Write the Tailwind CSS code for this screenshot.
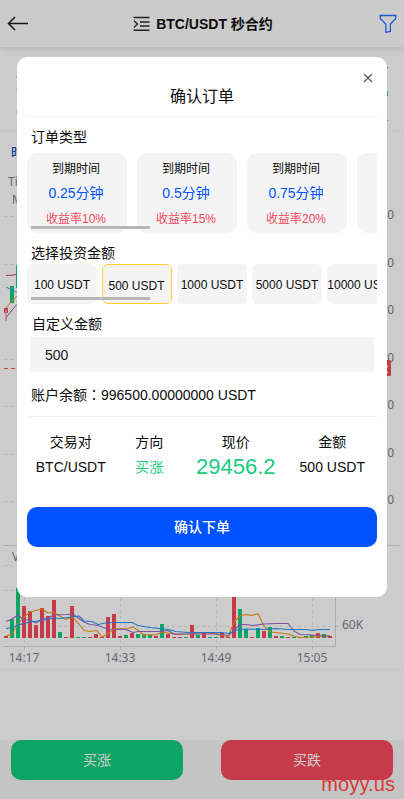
<!DOCTYPE html>
<html lang="zh-CN">
<head>
<meta charset="utf-8">
<meta name="viewport" content="width=device-width, initial-scale=1">
<title>BTC/USDT 秒合约</title>
<script src="https://cdn.jsdelivr.net/npm/@tailwindcss/browser@4"></script>
</head>
<body class="relative h-[799px] w-[404px] overflow-hidden bg-[#cccccc] font-['Liberation_Sans','Noto_Sans_CJK_SC',sans-serif] text-sm text-[#0c0c0c]">

<div class="flex h-full flex-col">
  <header class="flex h-[47px] shrink-0 items-center justify-between bg-[#cbcbcb] pr-[7px] pl-[7px] shadow-[0_3px_4px_rgba(0,0,0,0.09)]">
    <svg class="h-5 w-[22px]" viewBox="0 0 22 20" fill="none" stroke="#151515" stroke-width="1.5"><path d="M21 9.5H1.5M8 3L1.5 9.5L8 16"/></svg>
    <div class="flex items-center gap-[6px] pr-[2px]">
      <svg class="h-4 w-[17px]" viewBox="0 0 17 16" fill="none" stroke="#222" stroke-width="1.4"><path d="M0.5 1.5H16.5M7 6H16.5M7 10H16.5M0.5 14.3H16.5M1 4.7L4.5 8L1 11.3"/></svg>
      <h1 class="text-sm leading-5 font-bold whitespace-nowrap">BTC/USDT 秒合约</h1>
    </div>
    <svg class="h-5 w-[18px]" viewBox="0 0 18 20" fill="none" stroke="#1d55dc" stroke-width="1.3" stroke-linejoin="round"><path d="M1.2 1.5H16.8V4.5L11.4 10V17.3L6.8 18.4V10L1.2 4.5Z"/></svg>
  </header>

  <section class="flex h-[85px] shrink-0 justify-between px-4 pt-5">
    <div class="flex flex-col"><i class="mt-[9px] h-[2px] w-[2px] bg-[#cfa25f]"></i><i class="mt-[11px] h-[2px] w-[2px] bg-[#cfa25f]"></i><i class="mt-[20px] h-[2px] w-[2px] bg-[#cfa25f]"></i></div>
    <div class="flex flex-col"><i class="h-px w-[2px] bg-[#3b86b8]"></i><i class="mt-[23px] h-[5px] w-[2px] bg-[#3b86b8]"></i><i class="mt-[24px] h-px w-[2px] bg-[#3b86b8]"></i></div>
  </section>

  <section class="h-[538px] shrink-0 border-b border-[#c7c7c7] bg-[#cccccc] shadow-[0_-1px_3px_rgba(0,0,0,0.04)]">
    <svg class="block h-[537px] w-[404px]" viewBox="0 132 404 537" font-family="'Noto Sans','Noto Sans CJK SC',sans-serif" font-size="12" fill="#626873">
      <text x="11" y="157" fill="#063c9c" font-weight="500">时间</text>
      <text x="8" y="186">Time</text>
      <text x="12" y="204">MA</text>
      <g stroke="#b9b9b9" stroke-dasharray="3 3" fill="none">
        <path d="M4 216.5H335M4 264.5H335M4 311.5H335M4 359.5H335M4 406.5H335M4 454.5H335M4 501.5H335M4 565.5H335M4 590.5H335M4 626.5H335"/>
        <path d="M24.5 160V646M120.5 160V646M216.5 160V646M312.5 160V646"/>
      </g>
      <g stroke="#acacac" fill="none"><path d="M4 545.5H400M4 646.5H335.5V160M335.5 626.5H339M24.5 646V649.5M120.5 646V649.5M216.5 646V649.5M312.5 646V649.5"/></g>
      <path d="M4 368.5H335" stroke="#c93c4c" stroke-dasharray="4 3"/>
      <path d="M16 265h3v23h-3zM10 286h4v17h-4z" fill="#0da466"/>
      <path d="M4 308h4v5h-4z" fill="#c93947"/><path d="M6 310V321" stroke="#c77880" stroke-width="1.5"/>
      <g fill="none"><path d="M6 275.5L14 275L20 273" stroke="#9b3764"/><path d="M6 287L20 294" stroke="#3776ba"/><path d="M6 308L12 301L20 293" stroke="#c87915"/><path d="M6 318L12 310L20 301" stroke="#7e53a0"/></g>
      <g text-anchor="end">
        <text x="394" y="219">29520.0</text><text x="394" y="267">29500.0</text><text x="394" y="314">29480.0</text><text x="394" y="362">29460.0</text><text x="394" y="409">29440.0</text><text x="394" y="457">29420.0</text><text x="394" y="504">29400.0</text>
      </g>
      <rect x="336" y="360" width="55" height="16" rx="1.500" fill="#cb384a"/><text x="388.500" y="373" text-anchor="end" fill="#d8d0d0">29456.2</text>
      <text x="12" y="561">VOL</text>
      <path fill="#c83a47" d="M4 636h4v2h-4zM22 606h4v32h-4zM28 611h4v27h-4zM34 625h4v13h-4zM40 608h4v30h-4zM46 616h4v22h-4zM52 600h4v38h-4zM64 637h4v1h-4zM70 606h4v32h-4zM94 634h4v4h-4zM88 637h4v1h-4zM100 637h4v1h-4zM106 617h4v21h-4zM112 614h4v24h-4zM118 636h4v2h-4zM130 633h4v5h-4zM154 636h4v2h-4zM166 634h4v4h-4zM172 637h4v1h-4zM178 637h4v1h-4zM190 625h4v13h-4zM202 633h4v5h-4zM220 633h4v5h-4zM226 637h4v1h-4zM232 590h4v48h-4zM250 637h4v1h-4zM262 631h4v7h-4zM274 636h4v2h-4zM286 637h4v1h-4zM298 637h4v1h-4zM316 633h4v5h-4zM328 636h4v2h-4z"/>
      <path fill="#0da466" d="M10 619h4v19h-4zM16 588h4v50h-4zM58 632h4v6h-4zM76 637h4v1h-4zM82 637h4v1h-4zM124 635h4v3h-4zM136 634h4v4h-4zM142 634h4v4h-4zM148 635h4v3h-4zM160 624h4v14h-4zM184 637h4v1h-4zM196 635h4v3h-4zM208 637h4v1h-4zM214 637h4v1h-4zM238 609h4v29h-4zM244 629h4v9h-4zM256 628h4v10h-4zM268 627h4v11h-4zM280 636h4v2h-4zM292 637h4v1h-4zM304 636h4v2h-4zM310 635h4v3h-4zM322 634h4v4h-4z"/>
      <g fill="none" stroke-width="1.100" stroke-linejoin="round">
        <path stroke="#c87a12" d="M6 636L12 634L18 624L24 617L30 612L36 610.500L42 609L48 613L54 612.500L60 616L66 619.500L72 617L78 623L84 630.500L90 631.500L97 630.500L102 637L108 634L114 628.500L126 629L133 627L139 631L144 635.500L150 634.500L156 635L162 632L168 633L176 634.500L190 634L204 632.500L216 634L228 637L234 622L240 616L246 614.500L252 615.500L258 613.500L264 626L270 632L276 632.500L288 634L294 636L300 637.500L312 637L324 636L330 635.500"/>
        <path stroke="#7e53a0" d="M6 621.500L12 619L18 615L24 620L30 620L36 623L42 619L48 618L54 615L66 614.500L73 614L78 618L84 622L90 624.500L96 625L102 627L108 629L126 629.500L133 632.500L138 631.500L160 631.500L168 630.500L174 634L200 634L216 634L229 635.500L235 629L240 624.500L246 624.500L253 625.500L264 624L276 623.500L288 623.500L294 631L300 634.500L312 635L330 636.500"/>
        <path stroke="#2376c1" d="M6 628.500L12 627.500L18 625L24 623.500L30 622L42 620.500L54 618L60 618.500L72 617L79 616L84 621L92 621.500L98 624.500L108 622.500L132 622.500L138 625.500L150 627.500L168 629.500L176 631.500L188 632.500L222 632.500L229 633.500L236 630L246 629L264 629.500L276 628.500L288 629.500L306 629.500L313 630.500L318 629.500L330 629.500"/>
      </g>
      <text x="342" y="629">60K</text>
      <g text-anchor="middle"><text x="24" y="662">14:17</text><text x="120" y="662">14:33</text><text x="216" y="662">14:49</text><text x="312" y="662">15:05</text></g>
    </svg>
  </section>

  <footer class="mt-auto flex h-[59px] shrink-0 justify-between bg-[#c4c4c4] px-[11px]">
    <div class="flex h-10 w-[172px] items-center justify-center rounded-[10px] bg-[#0da466] text-[#d0d0d0]">买涨</div>
    <div class="flex h-10 w-[172px] items-center justify-center rounded-[10px] bg-[#c63a4a] text-[#d0d0d0]">买跌</div>
  </footer>
</div>

<div class="absolute right-[9px] bottom-[3px] text-xl leading-6 tracking-[0.1px] text-[#dc3836]">moyy.us</div>

<main class="absolute top-[57px] left-[17px] flex h-[540px] w-[370px] flex-col rounded-[10px] bg-white px-[10px]">
  <div class="flex h-7 items-end justify-end pr-1 pb-[2px]">
    <svg class="h-[10px] w-[10px]" viewBox="0 0 10 10" stroke="#555" stroke-width="1.2"><path d="M1 1L9 9M9 1L1 9"/></svg>
  </div>
  <h2 class="flex h-[32px] items-center justify-center border-b border-[#f0f0f0] pb-[7px] text-base leading-6">确认订单</h2>

  <h3 class="flex h-[36px] items-center pt-[4px] pl-1">订单类型</h3>
  <div class="relative flex h-20 gap-[10px] overflow-hidden">
    <div class="flex w-[100px] shrink-0 flex-col items-center rounded-[10px] bg-[#f4f4f4] pt-[7px] pr-[2px]"><span class="text-xs leading-[18px]">到期时间</span><span class="mt-[5px] leading-5 text-[#0052ff]">0.25分钟</span><span class="mt-[7px] text-xs leading-[18px] text-[#f6465d]">收益率10%</span></div>
    <div class="flex w-[100px] shrink-0 flex-col items-center rounded-[10px] bg-[#f4f4f4] pt-[7px] pr-[2px]"><span class="text-xs leading-[18px]">到期时间</span><span class="mt-[5px] leading-5 text-[#0052ff]">0.5分钟</span><span class="mt-[7px] text-xs leading-[18px] text-[#f6465d]">收益率15%</span></div>
    <div class="flex w-[100px] shrink-0 flex-col items-center rounded-[10px] bg-[#f4f4f4] pt-[7px] pr-[2px]"><span class="text-xs leading-[18px]">到期时间</span><span class="mt-[5px] leading-5 text-[#0052ff]">0.75分钟</span><span class="mt-[7px] text-xs leading-[18px] text-[#f6465d]">收益率20%</span></div>
    <div class="w-[100px] shrink-0 rounded-[10px] bg-[#f4f4f4]"></div>
    <div class="absolute bottom-[4px] left-1 h-[3px] w-[119px] bg-[#b7b7b7]"></div>
  </div>

  <h3 class="flex h-[31px] items-center pt-[9px] pl-1">选择投资金额</h3>
  <div class="relative flex h-10 gap-[5px] overflow-hidden text-xs whitespace-nowrap">
    <div class="flex w-[70px] shrink-0 items-center justify-center rounded-md bg-[#f4f4f4] pt-[2px]">100 USDT</div>
    <div class="flex w-[70px] shrink-0 items-center justify-center rounded-md border border-[#fdd02f] bg-[#f4f4f4] pt-[3px] pr-px">500 USDT</div>
    <div class="flex w-[70px] shrink-0 items-center justify-center rounded-md bg-[#f4f4f4] pt-[2px]">1000 USDT</div>
    <div class="flex w-[70px] shrink-0 items-center justify-center rounded-md bg-[#f4f4f4] pt-[2px]">5000 USDT</div>
    <div class="flex w-[70px] shrink-0 items-center justify-center rounded-md bg-[#f4f4f4] pt-[2px]">10000 USDT</div>
    <div class="absolute bottom-[4px] left-1 h-[3px] w-[119px] bg-[#b7b7b7]"></div>
  </div>

  <h3 class="flex h-[33px] items-center pt-[7px] pl-[5px]">自定义金额</h3>
  <div class="mx-[3px] flex h-[35px] items-center bg-[#f4f4f4] pl-[15px] text-[#222]">500</div>
  <p class="flex h-[45px] items-center border-b border-[#f0f0f0] pt-[2px] pl-1"><span>账户余额<span lang="zh-TW" class="font-['Noto_Sans_CJK_TC',sans-serif] leading-none">：</span>996500.00000000 USDT</span></p>

  <div class="flex h-[90px] pt-[15px] text-center leading-5">
    <div class="w-[88px]"><p>交易对</p><p class="mt-[5px]">BTC/USDT</p></div>
    <div class="w-[70px]"><p>方向</p><p class="mt-[5px] text-[#18cb80]">买涨</p></div>
    <div class="w-[104px]"><p>现价</p><p class="mt-[5px] text-[22px] text-[#18cb80]">29456.2</p></div>
    <div class="w-[90px]"><p>金额</p><p class="mt-[5px]">500 USDT</p></div>
  </div>
  <button class="h-10 rounded-[10px] bg-[#0052ff] font-medium text-white">确认下单</button>
</main>
</body>
</html>
